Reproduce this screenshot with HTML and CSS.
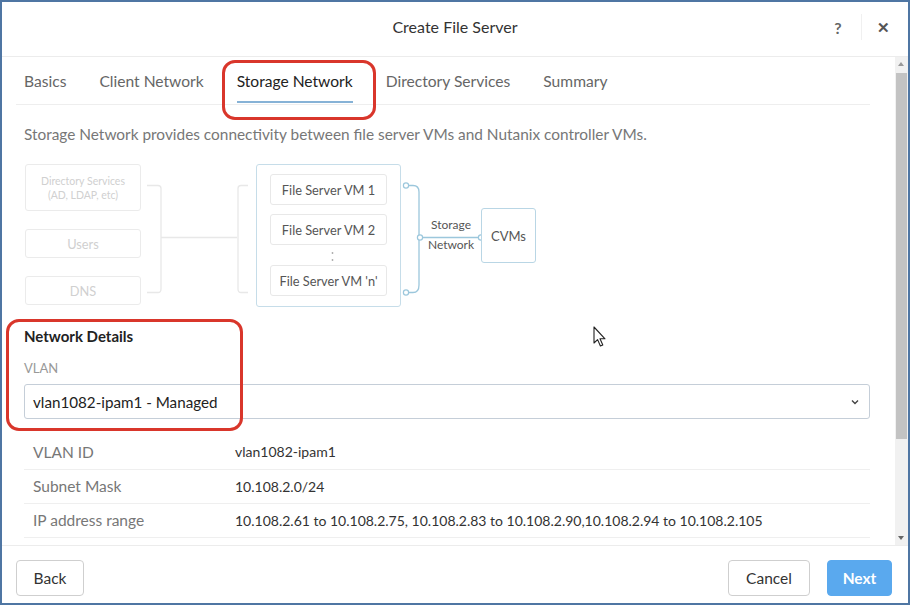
FILE: index.html
```html
<!DOCTYPE html>
<html lang="en">
<head>
    <meta charset="UTF-8">
    <title>Create File Server</title>
    <link rel="stylesheet" href="styles.css">
</head>
<body>

<div class="dialog">
    <div class="header">
        <div class="title">Create File Server</div>
        <div class="header-actions">
            <span class="help">?</span>
            <span class="sep"></span>
            <span class="close">&#x2715;</span>
        </div>
    </div>

    <div class="body">
        <div class="content">
            <div class="tabs">
                <div class="tab">Basics</div>
                <div class="tab">Client Network</div>
                <div class="tab active">Storage Network</div>
                <div class="tab">Directory Services</div>
                <div class="tab">Summary</div>
            </div>

            <p class="desc">Storage Network provides connectivity between file server VMs and Nutanix controller VMs.</p>

            <!-- diagram: boxes are placed on a free canvas -->
            <div class="diagram">
                <svg class="wires" width="520" height="145" viewBox="0 0 520 145">
                    <path class="faded" d="M122 21.5 H133 Q136 21.5 136 24.5 V125 Q136 128.5 133 128.5 H122"/>
                    <path class="faded" d="M136 73.5 H212"/>
                    <path class="faded" d="M223 21.5 H216 Q213 21.5 213 24.5 V125 Q213 128.5 216 128.5 H223"/>
                    <path class="blue" d="M384 21.5 H388 Q394 21.5 394 28 V121 Q394 128.5 388 128.5 H384"/>
                    <path class="blue" d="M397 73.5 H453"/>
                    <circle class="dot" cx="381" cy="21.5" r="2.6"/>
                    <circle class="dot" cx="381" cy="128.5" r="2.6"/>
                    <circle class="dot" cx="395" cy="73.5" r="2.6"/>
                    <circle class="dot" cx="456" cy="73.5" r="2.6"/>
                    <circle class="vdot" cx="307.5" cy="89" r="0.9"/>
                    <circle class="vdot" cx="307.5" cy="96" r="0.9"/>
                </svg>

                <div class="node faded-node dir">Directory Services<br>(AD, LDAP, etc)</div>
                <div class="node faded-node users">Users</div>
                <div class="node faded-node dns">DNS</div>

                <div class="vm-group"></div>
                <div class="node vm vm1">File Server VM 1</div>
                <div class="node vm vm2">File Server VM 2</div>
                <div class="node vm vmn">File Server VM 'n'</div>

                <div class="net-label">Storage<br>Network</div>
                <div class="node cvm">CVMs</div>
            </div>

            <div class="section-title">Network Details</div>
            <div class="field-label">VLAN</div>
            <div class="select">
                <span>vlan1082-ipam1 - Managed</span>
                <svg width="8" height="6" viewBox="0 0 8 6"><path d="M1 1.5 L4 4.5 L7 1.5" fill="none" stroke="#444" stroke-width="1.4"/></svg>
            </div>

            <table class="details">
                <tr><td class="key">VLAN ID</td><td>vlan1082-ipam1</td></tr>
                <tr><td class="key">Subnet Mask</td><td>10.108.2.0/24</td></tr>
                <tr><td class="key">IP address range</td><td>10.108.2.61 to 10.108.2.75, 10.108.2.83 to 10.108.2.90,10.108.2.94 to 10.108.2.105</td></tr>
            </table>
        </div>

        <div class="scrollbar">
            <div class="arrow up"></div>
            <div class="thumb"></div>
            <div class="track"></div>
            <div class="arrow down"></div>
        </div>
    </div>

    <div class="footer">
        <button class="btn">Back</button>
        <div class="spacer"></div>
        <button class="btn">Cancel</button>
        <button class="btn primary">Next</button>
    </div>

    <!-- red annotations drawn over the screenshot -->
    <div class="mark mark-tab"></div>
    <div class="mark mark-net"></div>

    <svg class="cursor" width="14" height="22" viewBox="0 0 14 22">
        <path d="M1 1 V17 L4.6 13.6 L7.4 20 L9.8 19 L7 12.8 H12 Z" fill="#fff" stroke="#222" stroke-width="1.1" stroke-linejoin="round"/>
    </svg>
</div>

</body>
</html>
```

FILE: styles.css
```css
* { box-sizing: border-box; }

body {
    margin: 0;
    font-family: Lato, "Open Sans", sans-serif;
    color: #333;
    background: #fff;
}

.dialog {
    position: relative;
    width: 910px;
    height: 605px;
    border: 2px solid #4f76a3;
    display: flex;
    flex-direction: column;
    background: #fff;
}

/* header */
.header {
    height: 55px;
    padding-bottom: 5px;
    border-bottom: 1px solid #ececec;
    display: flex;
    align-items: center;
    justify-content: center;
    position: relative;
}

.title {
    font-size: 16px;
    color: #333;
}

.header-actions {
    position: absolute;
    right: 17px;
    top: 0;
    height: 50px;
    display: flex;
    align-items: center;
}

.help {
    font-size: 16px;
    font-weight: bold;
    color: #666;
    width: 20px;
    text-align: center;
}

.sep {
    width: 1px;
    height: 26px;
    background: #f0f0f0;
    margin: 0 13px;
}

.close {
    font-size: 15px;
    font-weight: bold;
    color: #555;
    width: 16px;
    text-align: center;
}

/* scroll body */
.body {
    flex: 1;
    display: flex;
    min-height: 0;
}

.content {
    flex: 1;
    padding: 0 25px 0 22px;
    overflow: hidden;
}

.tabs {
    display: flex;
    height: 48px;
    border-bottom: 1px solid #eeeeee;
    margin-left: -8px;
    padding-left: 8px;
}

.tab {
    font-size: 15.6px;
    color: #666;
    margin-right: 33px;
    padding-top: 15px;
    height: 48px;
}

.tab.active {
    color: #222;
    border-bottom: 2px solid #86b2d6;
    height: 46px;
}

.desc {
    margin: 20px 0 0;
    font-size: 15.4px;
    color: #777;
}

/* diagram */
.diagram {
    position: relative;
    width: 520px;
    height: 145px;
    margin-top: 21px;
    margin-left: 1px;
}

.wires {
    position: absolute;
    left: 0;
    top: 0;
}

.wires path {
    fill: none;
    stroke-width: 1.3;
}

.wires .faded { stroke: #e8e8e8; }
.wires .blue { stroke: #9cc7dc; }
.wires .dot { fill: #fff; stroke: #9cc7dc; stroke-width: 1.2; }
.wires .vdot { fill: #aaa; }

.node {
    position: absolute;
    display: flex;
    align-items: center;
    justify-content: center;
    text-align: center;
    border-radius: 3px;
    font-size: 12.8px;
    background: #fff;
}

.faded-node {
    border: 1px solid #ebebeb;
    color: #d0d0d0;
    left: 0;
    width: 116px;
}

.dir { top: 0; height: 47px; font-size: 10.5px; line-height: 14px; }
.users { top: 65px; height: 29px; }
.dns { top: 112px; height: 29px; }

.vm-group {
    position: absolute;
    left: 231px;
    top: 0;
    width: 145px;
    height: 143px;
    border: 1px solid #c6dde9;
    border-radius: 3px;
}

.vm {
    left: 245px;
    width: 117px;
    height: 31px;
    border: 1px solid #e8e8e8;
    color: #555;
}

.vm1 { top: 10px; }
.vm2 { top: 50px; }
.vmn { top: 101px; }

.net-label {
    position: absolute;
    left: 398px;
    top: 51px;
    width: 56px;
    text-align: center;
    font-size: 12px;
    line-height: 20px;
    color: #555;
}

.cvm {
    left: 456px;
    top: 44px;
    width: 55px;
    height: 55px;
    border: 1px solid #b9d6e5;
    color: #555;
    font-size: 13px;
}

/* network details */
.section-title {
    margin-top: 18px;
    font-size: 15px;
    font-weight: bold;
    color: #222;
}

.field-label {
    margin-top: 15px;
    font-size: 13px;
    color: #999;
}

.select {
    margin-top: 8px;
    height: 35px;
    border: 1px solid #c5ced8;
    border-radius: 3px;
    display: flex;
    align-items: center;
    justify-content: space-between;
    padding: 0 10px 0 8px;
    font-size: 15.2px;
    color: #222;
}

.details {
    width: 100%;
    margin-top: 16px;
    border-collapse: collapse;
    font-size: 14px;
}

.details td {
    height: 34px;
    padding: 0;
    border-bottom: 1px solid #efefef;
    color: #333;
}

.details td.key {
    width: 211px;
    padding-left: 9px;
    font-size: 15.5px;
    color: #777;
}

/* fake scrollbar */
.scrollbar {
    width: 13px;
    display: flex;
    flex-direction: column;
    background: #f1f1f1;
}

.arrow {
    height: 14px;
    position: relative;
}

.arrow::after {
    content: "";
    position: absolute;
    left: 3px;
    border-left: 3.5px solid transparent;
    border-right: 3.5px solid transparent;
}

.arrow.up::after { top: 5px; border-bottom: 4px solid #999; }
.arrow.down::after { top: 5px; border-top: 4px solid #666; }

.thumb {
    height: 366px;
    background: #c3c3c3;
    margin: 2px 1px;
}

.track { flex: 1; }

/* footer */
.footer {
    height: 58px;
    border-top: 1px solid #ececec;
    display: flex;
    align-items: center;
    padding: 6px 16px 0 14px;
}

.spacer { flex: 1; }

.btn {
    height: 36px;
    padding: 0 8px;
    font-family: inherit;
    font-size: 15.5px;
    color: #333;
    background: #fff;
    border: 1px solid #cfcfcf;
    border-radius: 4px;
}

.btn + .btn { margin-left: 17px; }
.footer .btn:first-child { width: 68px; }
.footer .btn:nth-child(3) { width: 82px; }

.btn.primary {
    width: 65px;
    background: #5aa9ee;
    border-color: #5aa9ee;
    color: #fff;
    font-weight: bold;
}

/* annotations */
.mark {
    position: absolute;
    border: 3px solid #d9362b;
    border-radius: 13px;
}

.mark-tab { left: 220px; top: 58px; width: 154px; height: 60px; }
.mark-net { left: 4px; top: 317px; width: 237px; height: 112px; }

.cursor {
    position: absolute;
    left: 591px;
    top: 324px;
}
```
